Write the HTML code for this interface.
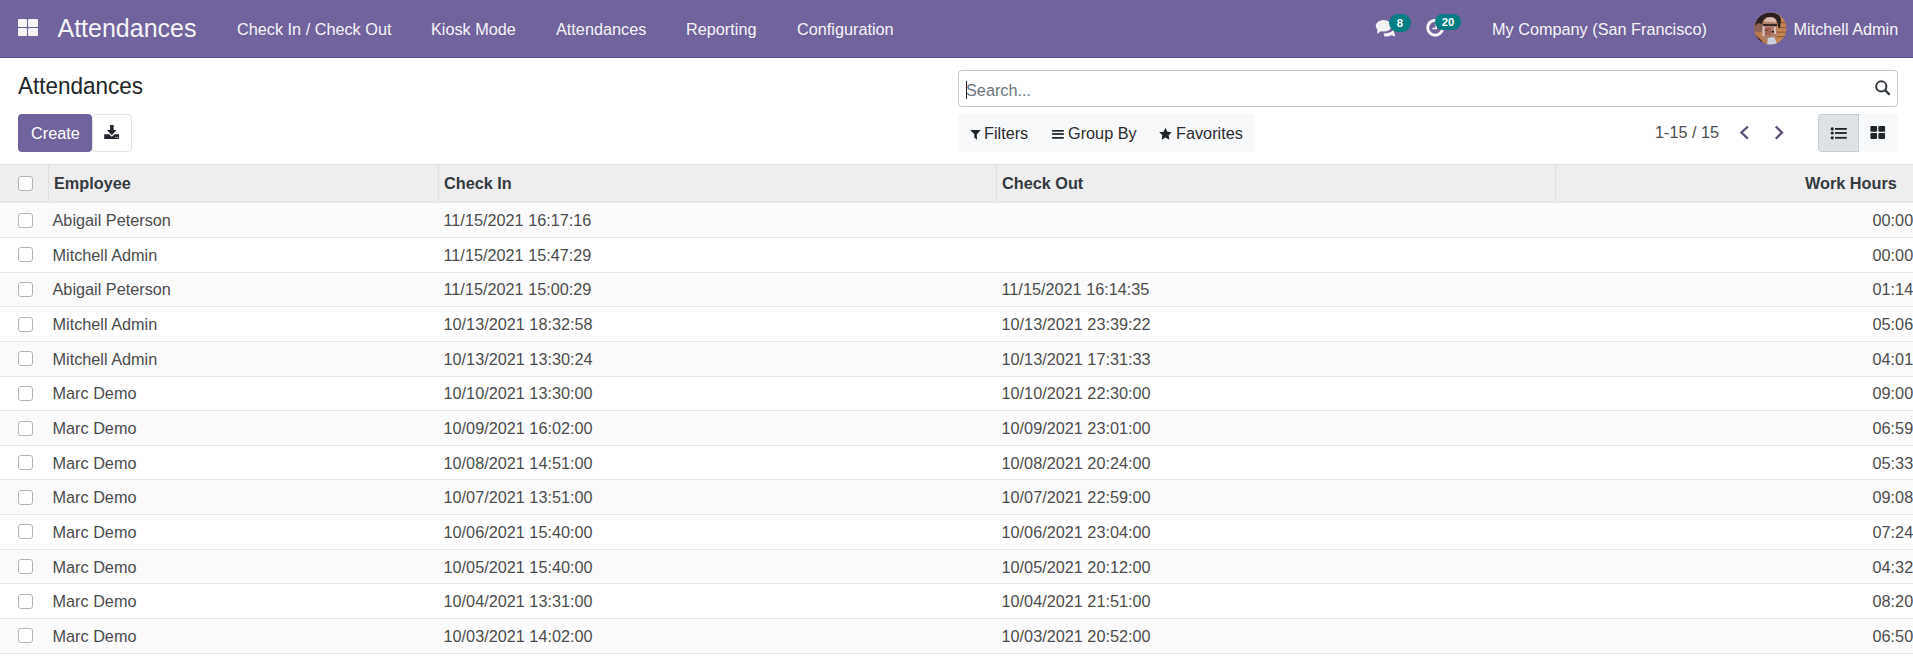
<!DOCTYPE html>
<html><head><meta charset="utf-8">
<style>
*{box-sizing:border-box;margin:0;padding:0}
html,body{width:1913px;height:657px;overflow:hidden;background:#fff;font-family:"Liberation Sans",sans-serif;font-size:16.25px;color:#4c4c4c}
.a{position:absolute;white-space:nowrap;line-height:16.25px}
#nav{position:absolute;left:0;top:0;width:1913px;height:58px;background:#71639e;border-bottom:1px solid #5f5389}
#nav .a{color:#f5f4f8}
.sq{position:absolute;background:#f4f4f6;border-radius:1px}
.badge{position:absolute;z-index:5;background:#017e84;color:#fff;font-weight:700;font-size:11.25px;line-height:12px;text-align:center;border-radius:9px}
#cp{position:absolute;left:0;top:58px;width:1913px;height:107px;border-bottom:1px solid #dee2e6}
.btnp{position:absolute;left:18px;top:114px;width:74px;height:38px;background:#71639e;border-radius:4px}
.btnd{position:absolute;left:92px;top:114px;width:40px;height:38px;background:#fff;border:1px solid #dee2e6;border-radius:4px}
.search{position:absolute;left:958px;top:70px;width:940px;height:37px;border:1px solid #c5c5c5;border-radius:4px}
.fbar{position:absolute;left:958px;top:114px;width:297px;height:38px;background:#f8f9fa;border-radius:4px}
.vs1{position:absolute;left:1818px;top:114px;width:41px;height:38px;background:#dde2e7;border-radius:4px 0 0 4px;outline:1px dotted rgba(90,90,90,.28);outline-offset:-1px}
.vs2{position:absolute;left:1859px;top:114px;width:39px;height:38px;background:#f8f9fa;border-radius:0 4px 4px 0}
#thead{position:absolute;left:0;top:165px;width:1913px;height:38px;background:#eeeeee;border-bottom:2px solid #e4e7eb}
.vsep{position:absolute;top:165px;width:1px;height:37px;background:#dde1e6}
.th{color:#343a40;font-weight:700}
.row{position:absolute;left:0;width:1913px;border-bottom:1px solid #e3e6ea}
.odd{background:#fbfbfc}
.cb{position:absolute;left:18px;width:15px;height:15px;border:1px solid #adb5bd;border-radius:3px;background:#fff}
</style></head><body>
<div id="nav">
  <div class="sq" style="left:18px;top:19px;width:9.2px;height:8.1px"></div>
  <div class="sq" style="left:28.4px;top:19px;width:9.6px;height:8.1px"></div>
  <div class="sq" style="left:18px;top:28px;width:9.2px;height:8.1px"></div>
  <div class="sq" style="left:28.4px;top:28px;width:9.6px;height:8.1px"></div>
  <div class="a" style="left:57.5px;top:15.6px;font-size:25px;line-height:25px">Attendances</div>
  <div class="a" style="left:237px;top:21.2px">Check In / Check Out</div>
  <div class="a" style="left:431px;top:21.2px">Kiosk Mode</div>
  <div class="a" style="left:556px;top:21.2px">Attendances</div>
  <div class="a" style="left:686px;top:21.2px">Reporting</div>
  <div class="a" style="left:797px;top:21.2px">Configuration</div>
  <div class="a" style="left:1492px;top:21.2px">My Company (San Francisco)</div>
  <div class="a" style="left:1793.5px;top:21.2px">Mitchell Admin</div>
  <div class="badge" style="left:1389px;top:14px;width:22px;height:18px;line-height:18px">8</div>
  <div class="badge" style="left:1435px;top:14px;width:26px;height:16px;line-height:16px">20</div>
  <svg style="position:absolute;left:1754px;top:12px" width="33" height="33" viewBox="0 0 33 33"><defs><clipPath id="av"><circle cx="16.3" cy="16.4" r="16"/></clipPath></defs><g clip-path="url(#av)"><rect width="33" height="33" fill="#b67c4f"/><rect x="0" y="10" width="9" height="10" fill="#8c6257"/><rect x="23" y="6" width="10" height="24" fill="#c7864f"/><g fill="#8d5a45"><rect x="24" y="10" width="9" height="1.2"/><rect x="24" y="15" width="9" height="1.2"/><rect x="23" y="19.5" width="10" height="1.2"/><rect x="23" y="24" width="9" height="1.2"/></g><path d="M1,14 C2,5 9,0 17,0.5 C24,1 27,4 27,9 L26,16 L24,15 C24,9 21,5 16,5 C11,5 9,8 8,12 L4,11 Z" fill="#2a2122"/><path d="M9,12 C9,6 13,5 16,5 C20,5 23,7 23,11 L23,22 C22,28 18,30 15,30 C11,30 8,26 8,20 Z" fill="#b0806f"/><path d="M10.5,10 C11,6 14,5.5 16.5,5.5 C20,5.5 22.5,7.5 22,10.5 C19,9.5 14,9.5 10.5,10Z" fill="#dcc0b8"/><rect x="9" y="12" width="14" height="2" fill="#3a2b2b"/><rect x="11.5" y="17.5" width="2.5" height="1.5" fill="#2a2122"/><rect x="17.5" y="19" width="2.5" height="1.5" fill="#2a2122"/><rect x="11" y="15.5" width="6" height="8" fill="#9a5650" opacity=".7"/><rect x="8.5" y="14" width="2" height="10" fill="#d9c4c4"/><rect x="20" y="15" width="2" height="7" fill="#d8bdb8"/><path d="M0,22 L6,27 L11,33 L0,33Z" fill="#2a2122"/><path d="M14,26 L20,25 L24,33 L13,33Z" fill="#c9d0dc"/></g></svg>
</div>
<div id="cp"></div>
<div class="a" style="left:18px;top:75.6px;font-size:22.5px;line-height:22.5px;color:#212529;transform:scaleY(1.08);transform-origin:0 19px">Attendances</div>
<div class="btnp"></div>
<div class="a" style="left:31px;top:125px;color:#fff">Create</div>
<div class="btnd"></div>
<div class="search"></div>
<div class="a" style="left:966px;top:81.5px;color:#6c757d">Search...</div>
<div style="position:absolute;left:966px;top:81px;width:1px;height:18px;background:#212529"></div>
<div class="fbar"></div>
<div class="a" style="left:984px;top:125px;color:#2a2a2e">Filters</div>
<div class="a" style="left:1068px;top:125px;color:#2a2a2e">Group By</div>
<div class="a" style="left:1176px;top:125px;color:#2a2a2e">Favorites</div>
<div class="a" style="left:1655px;top:124px;color:#4c4c4c">1-15 / 15</div>
<div class="vs1"></div><div class="vs2"></div>
<div id="thead"></div>
<div class="cb" style="top:176px"></div>
<div class="vsep" style="left:48px"></div>
<div class="vsep" style="left:438px"></div>
<div class="vsep" style="left:996px"></div>
<div class="vsep" style="left:1555px"></div>
<div class="a th" style="left:54px;top:175px">Employee</div>
<div class="a th" style="left:444px;top:175px">Check In</div>
<div class="a th" style="left:1002px;top:175px">Check Out</div>
<div class="a th" style="left:1805px;top:175px">Work Hours</div>

<!--ICONS-->
<svg style="position:absolute;left:98px;top:118px" width="28" height="28" viewBox="0 0 28 28"><g fill="#212529"><rect x="12.1" y="7" width="3.5" height="6"/><polygon points="9,12.1 18.6,12.1 13.8,17.3"/><path d="M6.2,16.2H11L13.8,18.7L16.6,16.2H21.1V20.9H6.2Z"/></g><circle cx="17.8" cy="19.4" r="0.6" fill="#dfe3ea"/><circle cx="19.7" cy="19.4" r="0.6" fill="#dfe3ea"/></svg>
<svg style="position:absolute;left:1868px;top:74px" width="28" height="28" viewBox="0 0 28 28"><circle cx="13.3" cy="12.45" r="5.1" fill="none" stroke="#343a40" stroke-width="2"/><line x1="17.3" y1="16.4" x2="21" y2="20.1" stroke="#343a40" stroke-width="2.3" stroke-linecap="round"/></svg>
<svg style="position:absolute;left:964px;top:120px" width="28" height="28" viewBox="0 0 28 28"><path d="M6.2,10H16.8L12.9,14.2V19.8L10.3,17.6V14.2Z" fill="#212529"/></svg>
<svg style="position:absolute;left:1044px;top:120px" width="28" height="28" viewBox="0 0 28 28"><g fill="#212529"><rect x="8.1" y="10" width="11.7" height="1.7"/><rect x="8.1" y="13.1" width="11.7" height="1.8"/><rect x="8.1" y="17" width="11.7" height="1.75"/></g></svg>
<svg style="position:absolute;left:1152px;top:120px" width="28" height="28" viewBox="0 0 28 28"><polygon fill="#212529" points="13.50,7.70 15.44,11.63 19.78,12.26 16.64,15.32 17.38,19.64 13.50,17.60 9.62,19.64 10.36,15.32 7.22,12.26 11.56,11.63"/></svg>
<svg style="position:absolute;left:1730px;top:118px" width="64" height="28" viewBox="0 0 64 28"><g fill="none" stroke="#5f5277" stroke-width="2.3" stroke-linecap="square"><polyline points="17,9.3 11.4,14.5 17,19.9"/><polyline points="46.6,9.3 52,14.5 46.6,19.9"/></g></svg>
<svg style="position:absolute;left:1818px;top:112px" width="80" height="42" viewBox="0 0 80 42"><g fill="#212529"><circle cx="14.2" cy="16.9" r="1.6"/><circle cx="14.2" cy="21" r="1.6"/><circle cx="14.2" cy="25.8" r="1.6"/><rect x="17" y="16" width="11.8" height="1.8"/><rect x="17" y="20.1" width="11.8" height="1.8"/><rect x="17" y="24.9" width="11.8" height="1.8"/><rect x="52.4" y="14.1" width="6.7" height="5.7" rx="0.8"/><rect x="60.4" y="14.1" width="6.7" height="5.7" rx="0.8"/><rect x="52.4" y="21.1" width="6.7" height="5.8" rx="0.8"/><rect x="60.4" y="21.1" width="6.7" height="5.8" rx="0.8"/></g></svg>
<svg style="position:absolute;left:1370px;top:10px" width="46" height="32" viewBox="0 0 46 32"><g fill="#f3f3f5"><path d="M13.5,23.5 C18,23.5 21.5,22 23.5,20 L25.3,26.6 L21.5,25.2 C19.5,26.2 17,26.6 14.5,26.4 Z"/><ellipse cx="13.6" cy="15.8" rx="7.9" ry="5.8"/><path d="M7.3,18.5 L7.3,23.9 L11,21 Z"/></g></svg>
<svg style="position:absolute;left:1420px;top:10px" width="46" height="32" viewBox="0 0 46 32"><circle cx="15.2" cy="17.7" r="7.5" fill="none" stroke="#f3f3f5" stroke-width="3"/><path d="M12.4,18.5H16.2V13" fill="none" stroke="#f3f3f5" stroke-width="1.6"/></svg>
<!--/ICONS-->
<!--ROWS-->
<div class="row odd" style="top:203px;height:35px"></div>
<div class="cb" style="top:213px"></div>
<div class="a" style="left:52.5px;top:212.00px">Abigail Peterson</div>
<div class="a" style="left:443.5px;top:212.00px">11/15/2021 16:17:16</div>
<div class="a" style="left:1872.5px;top:212.00px">00:00</div>
<div class="row" style="top:238px;height:35px"></div>
<div class="cb" style="top:247px"></div>
<div class="a" style="left:52.5px;top:246.67px">Mitchell Admin</div>
<div class="a" style="left:443.5px;top:246.67px">11/15/2021 15:47:29</div>
<div class="a" style="left:1872.5px;top:246.67px">00:00</div>
<div class="row odd" style="top:273px;height:34px"></div>
<div class="cb" style="top:282px"></div>
<div class="a" style="left:52.5px;top:281.34px">Abigail Peterson</div>
<div class="a" style="left:443.5px;top:281.34px">11/15/2021 15:00:29</div>
<div class="a" style="left:1001.5px;top:281.34px">11/15/2021 16:14:35</div>
<div class="a" style="left:1872.5px;top:281.34px">01:14</div>
<div class="row" style="top:307px;height:35px"></div>
<div class="cb" style="top:317px"></div>
<div class="a" style="left:52.5px;top:316.01px">Mitchell Admin</div>
<div class="a" style="left:443.5px;top:316.01px">10/13/2021 18:32:58</div>
<div class="a" style="left:1001.5px;top:316.01px">10/13/2021 23:39:22</div>
<div class="a" style="left:1872.5px;top:316.01px">05:06</div>
<div class="row odd" style="top:342px;height:35px"></div>
<div class="cb" style="top:351px"></div>
<div class="a" style="left:52.5px;top:350.68px">Mitchell Admin</div>
<div class="a" style="left:443.5px;top:350.68px">10/13/2021 13:30:24</div>
<div class="a" style="left:1001.5px;top:350.68px">10/13/2021 17:31:33</div>
<div class="a" style="left:1872.5px;top:350.68px">04:01</div>
<div class="row" style="top:377px;height:34px"></div>
<div class="cb" style="top:386px"></div>
<div class="a" style="left:52.5px;top:385.35px">Marc Demo</div>
<div class="a" style="left:443.5px;top:385.35px">10/10/2021 13:30:00</div>
<div class="a" style="left:1001.5px;top:385.35px">10/10/2021 22:30:00</div>
<div class="a" style="left:1872.5px;top:385.35px">09:00</div>
<div class="row odd" style="top:411px;height:35px"></div>
<div class="cb" style="top:421px"></div>
<div class="a" style="left:52.5px;top:420.02px">Marc Demo</div>
<div class="a" style="left:443.5px;top:420.02px">10/09/2021 16:02:00</div>
<div class="a" style="left:1001.5px;top:420.02px">10/09/2021 23:01:00</div>
<div class="a" style="left:1872.5px;top:420.02px">06:59</div>
<div class="row" style="top:446px;height:34px"></div>
<div class="cb" style="top:455px"></div>
<div class="a" style="left:52.5px;top:454.69px">Marc Demo</div>
<div class="a" style="left:443.5px;top:454.69px">10/08/2021 14:51:00</div>
<div class="a" style="left:1001.5px;top:454.69px">10/08/2021 20:24:00</div>
<div class="a" style="left:1872.5px;top:454.69px">05:33</div>
<div class="row odd" style="top:480px;height:35px"></div>
<div class="cb" style="top:490px"></div>
<div class="a" style="left:52.5px;top:489.36px">Marc Demo</div>
<div class="a" style="left:443.5px;top:489.36px">10/07/2021 13:51:00</div>
<div class="a" style="left:1001.5px;top:489.36px">10/07/2021 22:59:00</div>
<div class="a" style="left:1872.5px;top:489.36px">09:08</div>
<div class="row" style="top:515px;height:35px"></div>
<div class="cb" style="top:524px"></div>
<div class="a" style="left:52.5px;top:524.03px">Marc Demo</div>
<div class="a" style="left:443.5px;top:524.03px">10/06/2021 15:40:00</div>
<div class="a" style="left:1001.5px;top:524.03px">10/06/2021 23:04:00</div>
<div class="a" style="left:1872.5px;top:524.03px">07:24</div>
<div class="row odd" style="top:550px;height:34px"></div>
<div class="cb" style="top:559px"></div>
<div class="a" style="left:52.5px;top:558.70px">Marc Demo</div>
<div class="a" style="left:443.5px;top:558.70px">10/05/2021 15:40:00</div>
<div class="a" style="left:1001.5px;top:558.70px">10/05/2021 20:12:00</div>
<div class="a" style="left:1872.5px;top:558.70px">04:32</div>
<div class="row" style="top:584px;height:35px"></div>
<div class="cb" style="top:594px"></div>
<div class="a" style="left:52.5px;top:593.37px">Marc Demo</div>
<div class="a" style="left:443.5px;top:593.37px">10/04/2021 13:31:00</div>
<div class="a" style="left:1001.5px;top:593.37px">10/04/2021 21:51:00</div>
<div class="a" style="left:1872.5px;top:593.37px">08:20</div>
<div class="row odd" style="top:619px;height:35px"></div>
<div class="cb" style="top:628px"></div>
<div class="a" style="left:52.5px;top:628.04px">Marc Demo</div>
<div class="a" style="left:443.5px;top:628.04px">10/03/2021 14:02:00</div>
<div class="a" style="left:1001.5px;top:628.04px">10/03/2021 20:52:00</div>
<div class="a" style="left:1872.5px;top:628.04px">06:50</div>
<!--/ROWS-->
</body></html>
